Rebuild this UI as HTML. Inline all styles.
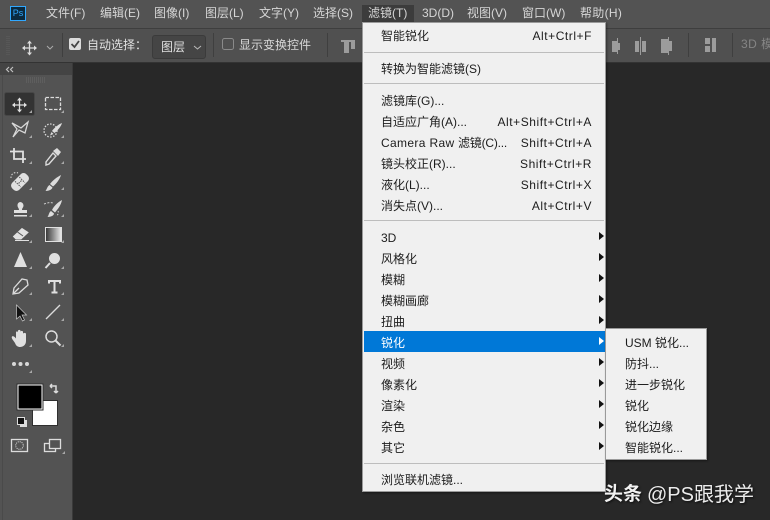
<!DOCTYPE html>
<html><head><meta charset="utf-8">
<style>
html,body{margin:0;padding:0}
#p{position:relative;width:770px;height:520px;overflow:hidden;background:#282828;font-family:"Liberation Sans","Noto Sans CJK SC",sans-serif;font-size:12px;color:#1a1a1a}
#p div,#p span{position:absolute;white-space:nowrap}
.m{color:#d6d6d6;top:5px;line-height:17px;height:17px}
.i{left:381px;line-height:16px;height:16px;color:#1c1c1c;margin-top:1px}
.s{right:178px;line-height:16px;height:16px;color:#1c1c1c;letter-spacing:.55px;text-align:right;margin-top:1px}
.j{left:625px;line-height:16px;height:16px;color:#1c1c1c;margin-top:1px}
.l{left:364px;width:240px;height:1px;background:#bdbdbd}
.a{left:599px;width:0;height:0;margin-top:1px;border-left:5px solid #111;border-top:4px solid transparent;border-bottom:4px solid transparent}
</style></head><body>
<div id="p">
<div style="left:0;top:0;width:770px;height:28px;background:#535353"></div>
<div style="left:0;top:28px;width:770px;height:1px;background:#3e3e3e"></div>
<div style="left:0;top:29px;width:770px;height:33px;background:#505050"></div>
<div style="left:0;top:62px;width:770px;height:1px;background:#333"></div>
<div style="left:0;top:63px;width:72px;height:457px;background:#535353"></div>
<div style="left:0;top:63px;width:72px;height:12px;background:#444"></div>
<div style="left:72px;top:63px;width:1px;height:457px;background:#3a3a3a"></div>
<div style="left:2px;top:75px;width:1px;height:445px;background:#4a4a4a"></div>

<div style="left:362px;top:5px;width:52px;height:17px;background:#3c3c3c"></div>
<div class="m" style="left:46px">文件(F)</div>
<div class="m" style="left:100px">编辑(E)</div>
<div class="m" style="left:154px">图像(I)</div>
<div class="m" style="left:205px">图层(L)</div>
<div class="m" style="left:259px">文字(Y)</div>
<div class="m" style="left:313px">选择(S)</div>
<div class="m" style="left:368px">滤镜(T)</div>
<div class="m" style="left:422px">3D(D)</div>
<div class="m" style="left:467px">视图(V)</div>
<div class="m" style="left:522px">窗口(W)</div>
<div class="m" style="left:580px;letter-spacing:.3px">帮助(H)</div>

<div style="left:10px;top:6px;width:14px;height:13px;border:1px solid #31a8ff;background:#0b2a3f;color:#31a8ff;font-size:9px;line-height:13px;text-align:center">Ps</div>

<div style="left:152px;top:35px;width:52px;height:22px;background:#454545;border:1px solid #3b3b3b;border-radius:3px"></div>
<div style="left:87px;top:37px;color:#e0e0e0;line-height:17px;font-size:12px">自动选择：</div>
<div style="left:161px;top:38px;color:#e0e0e0;line-height:18px;font-size:12px">图层</div>
<div style="left:239px;top:37px;color:#d8d8d8;line-height:17px;font-size:12px">显示变换控件</div>
<div style="left:741px;top:36px;color:#858585;line-height:17px;letter-spacing:.5px">3D 模</div>

<svg style="position:absolute;left:0;top:0" width="770" height="520" viewBox="0 0 770 520">
<path d="M7 36V56M9 36V56" stroke="#5e5e5e" stroke-dasharray="1 1" fill="none"/>
<!-- option bar separators -->
<path d="M62.500 33V57M213.500 33V57M327.500 33V57M688.500 33V57M732.500 33V57" stroke="#3f3f3f"/>
<!-- move option -->
<path d="M29.500 42V54M23.500 48H35.500" stroke="#dcdcdc" stroke-width="1.300"/>
<path d="M29.500 40.500l2.500 3h-5zM29.500 55.500l2.500-3h-5zM22 48l3-2.500v5zM37 48l-3-2.500v5z" fill="#dcdcdc"/>
<path d="M47 46l3 3 3-3" fill="none" stroke="#aaa"/>
<!-- checkbox -->
<rect x="69" y="38" width="12" height="12" rx="2" fill="#dcdcdc"/>
<path d="M71.500 44l3 3 4.500-6" fill="none" stroke="#444" stroke-width="1.800"/>
<rect x="222.500" y="38.500" width="11" height="11" rx="2" fill="none" stroke="#8a8a8a"/>
<path d="M194 46l3.500 3 3.500-3" fill="none" stroke="#bbb"/>
<!-- align icons -->
<g fill="#9c9c9c">
<rect x="341" y="40" width="14" height="2"/><rect x="344" y="42" width="5" height="11"/><rect x="351" y="42" width="4" height="7"/>
<rect x="612" y="41" width="5" height="11"/><rect x="617" y="38" width="1" height="16"/><rect x="618" y="43" width="2" height="7"/>
<rect x="635" y="41" width="4" height="11"/><rect x="640" y="37" width="1" height="18"/><rect x="642" y="41" width="4" height="11"/>
<rect x="661" y="39" width="7" height="14"/><rect x="668" y="37" width="1" height="18"/><rect x="669" y="41" width="3" height="10"/>
<rect x="705" y="38" width="5" height="6"/><rect x="705" y="46" width="5" height="6"/><rect x="712" y="38" width="4" height="14"/>
</g>

<!-- panel header -->
<path d="M9 67l-2.500 2.500 2.500 2.500M13 67l-2.500 2.500 2.500 2.500" fill="none" stroke="#c0c0c0" stroke-width="1.200"/>
<path d="M26 78H46M26 80H46M26 82H46" stroke="#6a6a6a" stroke-dasharray="1 1"/>

<!-- selected tool -->
<rect x="4.500" y="92.500" width="30" height="23" rx="2" fill="#333" stroke="#474747"/>
<!-- move -->
<path d="M19.500 99V111M13.500 105H25.500" stroke="#e0e0e0" stroke-width="1.300"/>
<path d="M19.500 97.500l2.500 3h-5zM19.500 112.500l2.500-3h-5zM12 105l3-2.500v5zM27 105l-3-2.500v5z" fill="#e0e0e0"/>
<!-- marquee -->
<rect x="45.500" y="97.500" width="15" height="12" fill="none" stroke="#dcdcdc" stroke-width="1.300" stroke-dasharray="3.500 1.500"/>
<!-- lasso -->
<path d="M12 123L21 128L28 122L25 133L19 130L13 137L17 129Z" fill="none" stroke="#d8d8d8" stroke-width="1.300"/>
<!-- quick select -->
<circle cx="50.500" cy="130.500" r="6.500" fill="none" stroke="#dcdcdc" stroke-dasharray="1.500 1.500" stroke-width="1.300"/>
<path d="M62 123C59 124 54 128 52 131L54.500 133C57 131 61 127 62 123ZM51.500 132L50 135.500L53.500 134Z" fill="#dcdcdc"/>
<!-- crop -->
<path d="M14 148V159H26M10 151.500H23V163" fill="none" stroke="#e0e0e0" stroke-width="1.800"/>
<!-- eyedropper -->
<g transform="translate(-1,1)"><path d="M54 152l3 3-7 8-3 1 0-3z" fill="none" stroke="#dcdcdc" stroke-width="1.400"/>
<path d="M58 147l4 4-3 4-5-5z" fill="#dcdcdc"/></g>
<!-- healing -->
<g transform="rotate(-45 20 182)"><rect x="10" y="177" width="20" height="10" rx="4" fill="#e0e0e0"/><path d="M17 178v8M23 178v8M18 182h4" stroke="#555" stroke-dasharray="1.500 1"/></g>
<path d="M11 178a5 5 0 0 1 7-5" fill="none" stroke="#ddd" stroke-dasharray="1.500 1.500"/>
<!-- brush -->
<path d="M61 175C57 177 52 181 50 184L53 186.500C56 184 60 179 61 175ZM49.500 185C47.500 186 47 189 45.500 191C49 191 52 189.500 52.500 187.500Z" fill="#dcdcdc"/>
<!-- stamp -->
<path d="M20 202a3.500 3.500 0 0 1 3.500 3.500c0 2-1.500 2.500-1.500 4.500h5v3H14v-3h5c0-2-1.500-2.500-1.500-4.500A3.500 3.500 0 0 1 20 202zM14 215h13v1.500H14z" fill="#e0e0e0"/>
<!-- history brush -->
<path d="M62 200C58 202 54 206 52 210L55 212.500C58 209 61 205 62 200ZM51 211C49 212 49 215 47.500 217C51 217 54 215.500 54 213.500Z" fill="#dcdcdc"/>
<path d="M44 204c3-1 6-2 9-1" fill="none" stroke="#ccc" stroke-dasharray="2 1.500"/>
<path d="M58 211c1 2 0 4-2 5" fill="none" stroke="#ccc" stroke-dasharray="1.500 1.500"/>
<!-- eraser -->
<path d="M22 228.500l6 4-7 6.500h-5l-2.500-2.500z" fill="#e0e0e0" stroke="#e0e0e0"/>
<path d="M15 240.500h14" stroke="#e0e0e0"/>
<path d="M17.500 232l5.500 4" stroke="#555"/>
<!-- gradient -->
<defs><linearGradient id="g"><stop offset="0" stop-color="#333"/><stop offset="1" stop-color="#eee"/></linearGradient></defs>
<rect x="45.500" y="227.500" width="16" height="14" fill="url(#g)" stroke="#e0e0e0"/>
<!-- triangle -->
<path d="M20.500 252l6.500 15H14z" fill="#e0e0e0"/>
<!-- dodge -->
<circle cx="54.500" cy="258.500" r="5.500" fill="#e0e0e0"/>
<path d="M50 263l-4.500 5" stroke="#e0e0e0" stroke-width="2"/>
<!-- pen -->
<path d="M27 280l1 5-9 8-6 1 1-6 8-9z M14 293l5-5" fill="none" stroke="#dcdcdc" stroke-width="1.300"/>
<!-- type -->
<path d="M49 283.500V281H60V283.500M54.500 281V292M51.500 292.500h6" fill="none" stroke="#e0e0e0" stroke-width="2"/>
<!-- path select -->
<path d="M16.500 305v14l3.500-3 2.500 5 2-1-2.500-5h4.500z" fill="#111" stroke="#c8c8c8" stroke-width=".7"/>
<!-- line -->
<path d="M46 319l14-14" stroke="#dcdcdc" stroke-width="1.300"/>
<!-- hand -->
<path d="M15 343C13 340 11 338 12 336.500C13 335.500 15 337 16 338.500V332.500C16 331 18 331 18 332.500V331C18 329.500 20.500 329.500 20.500 331V332C20.500 330.500 23 330.500 23 332V334C23 332.500 26 332.500 26 334V341C26 345 23 347 20 347C18 347 16 346 15 343Z" fill="#e0e0e0"/>
<!-- zoom -->
<circle cx="51.500" cy="336.500" r="5.500" fill="none" stroke="#dcdcdc" stroke-width="1.500"/>
<path d="M55.500 340.500l5 5" stroke="#dcdcdc" stroke-width="2"/>
<!-- dots -->
<circle cx="14" cy="364" r="2" fill="#d8d8d8"/><circle cx="20.500" cy="364" r="2" fill="#d8d8d8"/><circle cx="27" cy="364" r="2" fill="#d8d8d8"/>
<!-- corner marks -->
<g fill="#a8a8a8">
<path d="M32 110v3h-3zM64 110v3h-3zM32 135v3h-3zM64 135v3h-3zM32 161v3h-3zM64 161v3h-3zM32 187v3h-3zM64 187v3h-3zM32 214v3h-3zM64 214v3h-3zM32 240v3h-3zM64 240v3h-3zM32 266v3h-3zM64 266v3h-3zM32 292v3h-3zM64 292v3h-3zM32 318v3h-3zM64 318v3h-3zM32 344v3h-3zM64 344v3h-3zM32 370v3h-3zM65 451v3h-3z"/>
</g>
<!-- colors -->
<rect x="32.500" y="400.500" width="25" height="25" fill="#fff" stroke="#2f2f2f"/>
<rect x="18" y="385" width="24" height="24" fill="#000" stroke="#fff" stroke-width="1"/>
<rect x="17" y="384" width="26" height="26" fill="none" stroke="#2f2f2f"/>
<path d="M50 386v0h6v7M50 386l2-2M50 386l2 2M56 393l-2-2M56 393l2-2" fill="none" stroke="#dcdcdc" stroke-width="1.500"/>
<rect x="20" y="420" width="7" height="7" fill="#ddd"/>
<rect x="17.500" y="417.500" width="7" height="7" fill="#111" stroke="#ddd"/>
<!-- quick mask -->
<rect x="11.500" y="439.500" width="16" height="12" fill="none" stroke="#dcdcdc" stroke-width="1.300"/>
<circle cx="19.500" cy="445.500" r="3.800" fill="none" stroke="#dcdcdc" stroke-dasharray="1 1"/>
<!-- screen mode -->
<rect x="44.500" y="443.500" width="11" height="8" fill="none" stroke="#dcdcdc" stroke-width="1.300"/>
<rect x="49.500" y="439.500" width="11" height="9" fill="#535353" stroke="#dcdcdc" stroke-width="1.300"/>
</svg>

<!-- main menu -->
<div style="left:362px;top:22px;width:242px;height:468px;background:#f0f0f0;border:1px solid #9a9a9a;box-shadow:1px 1px 2px rgba(0,0,0,.4)"></div>
<div class="i" style="top:27px">智能锐化</div><div class="s" style="top:27px">Alt+Ctrl+F</div>
<div class="l" style="top:52px"></div>
<div class="i" style="top:60px">转换为智能滤镜(S)</div>
<div class="l" style="top:83px"></div>
<div class="i" style="top:92px">滤镜库(G)...</div>
<div class="i" style="top:113px">自适应广角(A)...</div><div class="s" style="top:113px">Alt+Shift+Ctrl+A</div>
<div class="i" style="top:134px;letter-spacing:.35px">Camera Raw</div><div class="i" style="left:458px;top:134px;letter-spacing:-.2px">滤镜(C)...</div><div class="s" style="top:134px">Shift+Ctrl+A</div>
<div class="i" style="top:155px">镜头校正(R)...</div><div class="s" style="top:155px">Shift+Ctrl+R</div>
<div class="i" style="top:176px">液化(L)...</div><div class="s" style="top:176px">Shift+Ctrl+X</div>
<div class="i" style="top:197px">消失点(V)...</div><div class="s" style="top:197px">Alt+Ctrl+V</div>
<div class="l" style="top:220px"></div>
<div class="i" style="top:229px">3D</div><div class="a" style="top:231px"></div>
<div class="i" style="top:250px">风格化</div><div class="a" style="top:252px"></div>
<div class="i" style="top:271px">模糊</div><div class="a" style="top:273px"></div>
<div class="i" style="top:292px">模糊画廊</div><div class="a" style="top:294px"></div>
<div class="i" style="top:313px">扭曲</div><div class="a" style="top:315px"></div>
<div style="left:364px;top:331px;width:241px;height:21px;background:#0078d7"></div>
<div class="i" style="top:334px;color:#fff">锐化</div><div class="a" style="top:336px;border-left-color:#fff"></div>
<div class="i" style="top:355px">视频</div><div class="a" style="top:357px"></div>
<div class="i" style="top:376px">像素化</div><div class="a" style="top:378px"></div>
<div class="i" style="top:397px">渲染</div><div class="a" style="top:399px"></div>
<div class="i" style="top:418px">杂色</div><div class="a" style="top:420px"></div>
<div class="i" style="top:439px">其它</div><div class="a" style="top:441px"></div>
<div class="l" style="top:463px"></div>
<div class="i" style="top:471px">浏览联机滤镜...</div>

<!-- submenu -->
<div style="left:605px;top:328px;width:100px;height:130px;background:#f0f0f0;border:1px solid #9a9a9a;box-shadow:1px 1px 2px rgba(0,0,0,.4)"></div>
<div class="j" style="top:334px">USM 锐化...</div>
<div class="j" style="top:355px">防抖...</div>
<div class="j" style="top:376px">进一步锐化</div>
<div class="j" style="top:397px">锐化</div>
<div class="j" style="top:418px">锐化边缘</div>
<div class="j" style="top:439px">智能锐化...</div>

<!-- watermark -->
<div style="left:604px;top:483px;line-height:24px;font-size:19px;font-weight:700;color:#f2f2f2;text-shadow:1px 1px 2px rgba(0,0,0,.7)">头条</div>
<div style="left:647px;top:483px;line-height:24px;font-size:20px;color:#ececec;text-shadow:1px 1px 2px rgba(0,0,0,.7)">@PS跟我学</div>
</div>
</body></html>
